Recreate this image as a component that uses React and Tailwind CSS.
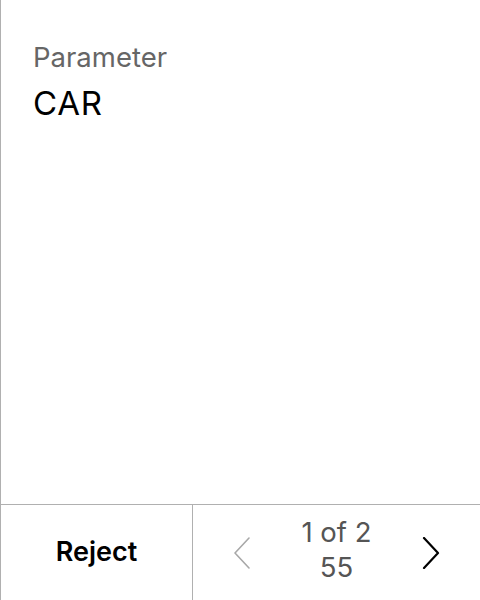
import React from "react";

const ChevronLeft = ({ className }) => (
    <svg viewBox="0 0 18 32" className={className} fill="none" stroke="currentColor" strokeWidth="1.6" strokeLinecap="round" strokeLinejoin="round">
        <path d="M16 1 L2 16 L16 31" />
    </svg>
);

const ChevronRight = ({ className }) => (
    <svg viewBox="0 0 18 32" className={className} fill="none" stroke="currentColor" strokeWidth="2.2" strokeLinecap="round" strokeLinejoin="round">
        <path d="M2 1 L16 16 L2 31" />
    </svg>
);

const App = () => {
    return (
        <div className="w-[480px] h-[600px] bg-white border-l border-[#b0b0b0] flex flex-col font-['Inter',sans-serif]">
            {/* Content */}
            <div className="flex-1 pl-[32px] pt-[40px]">
                <div className="text-[27.5px] leading-[34px] text-[#666666]">Parameter</div>
                <div className="text-[33px] leading-[40px] tracking-[0.8px] text-black mt-[9px]">CAR</div>
            </div>

            {/* Footer */}
            <div className="h-[96px] border-t border-[#b0b0b0] flex">
                <button className="w-[191px] flex items-center justify-center text-[27px] font-semibold text-black">
                    Reject
                </button>
                <div className="flex-1 border-l border-[#b0b0b0] flex items-center justify-between px-[40px]">
                    <ChevronLeft className="w-[18px] h-[32px] text-[#a8a8a8]" />
                    <div className="flex flex-col items-center mb-[6px] text-[27.5px] leading-[35px] text-[#555555]">
                        <span>1 of 2</span>
                        <span>55</span>
                    </div>
                    <ChevronRight className="w-[18px] h-[32px] text-black" />
                </div>
            </div>
        </div>
    );
};

export default App;
